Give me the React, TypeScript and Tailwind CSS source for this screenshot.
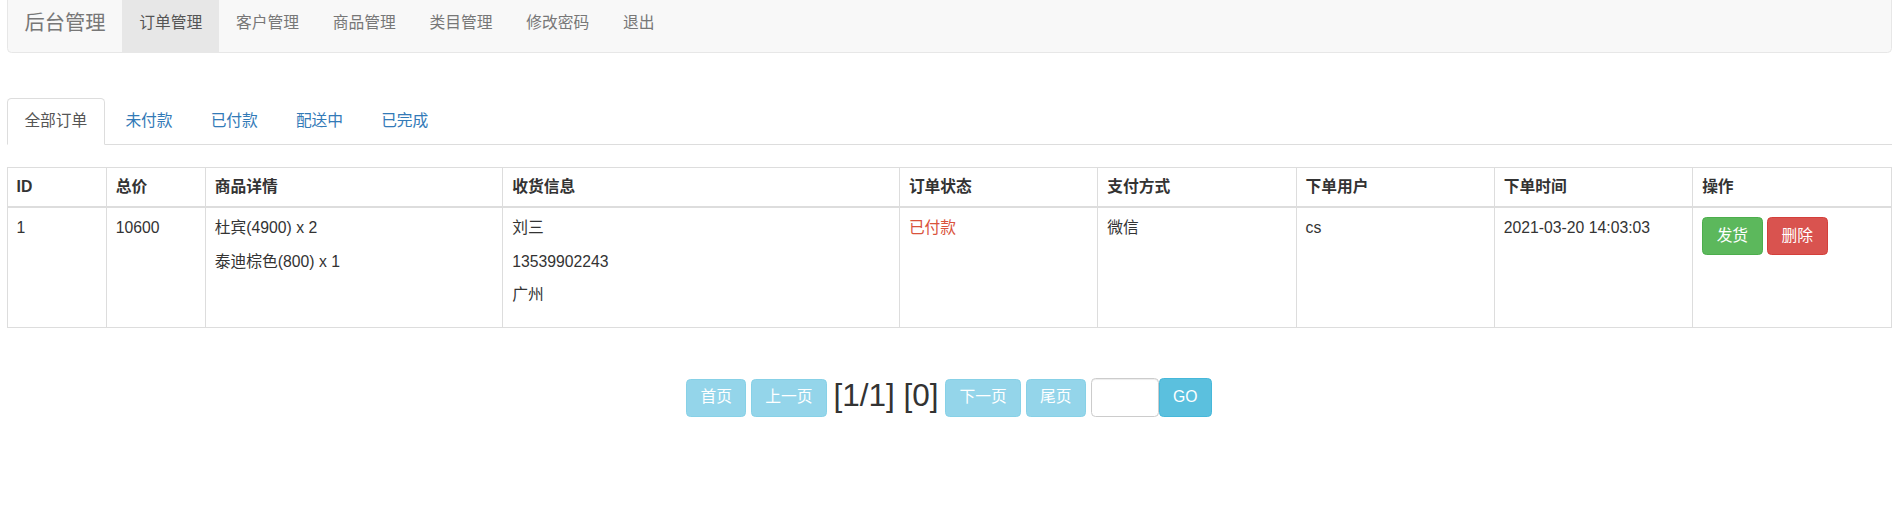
import React from "react";

const navItems = ["订单管理", "客户管理", "商品管理", "类目管理", "修改密码", "退出"];
const tabs = ["全部订单", "未付款", "已付款", "配送中", "已完成"];
const headers = ["ID", "总价", "商品详情", "收货信息", "订单状态", "支付方式", "下单用户", "下单时间", "操作"];

export default function App() {
  return (
    <div
      className="min-h-[532px] bg-white pl-[6.5px] pr-[11.5px] text-[15.75px] leading-[22.5px] text-[#333]"
      style={{ fontFamily: '"Liberation Sans", Arial, "Noto Sans CJK SC", sans-serif' }}
    >
      <nav className="mt-[-5.4px] flex h-[58.25px] rounded-[4.5px] border border-[#e7e7e7] bg-[#f8f8f8]">
        <a className="block px-[16.875px] py-[16.875px] text-[20.25px] leading-[22.5px] text-[#777]">后台管理</a>
        <ul className="flex">
          {navItems.map((t, i) => (
            <li key={t}>
              <a
                className={
                  i === 0
                    ? "block bg-[#e7e7e7] px-[16.875px] py-[16.875px] leading-[22.5px] text-[#555]"
                    : "block px-[16.875px] py-[16.875px] leading-[22.5px] text-[#777]"
                }
              >
                {t}
              </a>
            </li>
          ))}
        </ul>
      </nav>

      <ul className="mt-[45px] flex border-b border-[#ddd]">
        {tabs.map((t, i) => (
          <li key={t} className="-mb-px">
            <a
              className={
                i === 0
                  ? "mr-[2.25px] block rounded-t-[4.5px] border border-[#ddd] border-b-transparent bg-white px-[16.875px] py-[11.25px] leading-[22.5px] text-[#555]"
                  : "mr-[2.25px] block rounded-t-[4.5px] border border-transparent px-[16.875px] py-[11.25px] leading-[22.5px] text-[#337ab7]"
              }
            >
              {t}
            </a>
          </li>
        ))}
      </ul>

      <table className="mt-[22.5px] w-full table-fixed border-collapse border border-[#ddd]">
        <colgroup>
          <col className="w-[5.263%]" />
          <col className="w-[5.263%]" />
          <col className="w-[15.79%]" />
          <col className="w-[21.05%]" />
          <col className="w-[10.526%]" />
          <col className="w-[10.526%]" />
          <col className="w-[10.526%]" />
          <col className="w-[10.526%]" />
          <col className="w-[10.526%]" />
        </colgroup>
        <thead>
          <tr>
            {headers.map((h) => (
              <th key={h} className="border border-b-2 border-[#ddd] px-[9px] py-[7.5px] text-left align-bottom font-bold">
                {h}
              </th>
            ))}
          </tr>
        </thead>
        <tbody>
          <tr>
            <td className="border border-[#ddd] p-[9px] align-top">1</td>
            <td className="border border-[#ddd] p-[9px] align-top">10600</td>
            <td className="border border-[#ddd] p-[9px] align-top">
              <p className="mb-[11.25px]">杜宾(4900) x 2</p>
              <p className="mb-[11.25px]">泰迪棕色(800) x 1</p>
            </td>
            <td className="border border-[#ddd] p-[9px] align-top">
              <p className="mb-[11.25px]">刘三</p>
              <p className="mb-[11.25px]">13539902243</p>
              <p className="mb-[11.25px]">广州</p>
            </td>
            <td className="border border-[#ddd] p-[9px] align-top text-[#d9533c]">已付款</td>
            <td className="border border-[#ddd] p-[9px] align-top">微信</td>
            <td className="border border-[#ddd] p-[9px] align-top">cs</td>
            <td className="border border-[#ddd] p-[9px] align-top">2021-03-20 14:03:03</td>
            <td className="border border-[#ddd] p-[9px] align-top">
              <div className="flex gap-[4.4px]">
                <button className="rounded-[4.5px] border border-[#4cae4c] bg-[#5cb85c] px-[13.5px] py-[6.75px] text-[15.75px] leading-[22.5px] text-white">
                  发货
                </button>
                <button className="rounded-[4.5px] border border-[#d43f3a] bg-[#d9534f] px-[13.5px] py-[6.75px] text-[15.75px] leading-[22.5px] text-white">
                  删除
                </button>
              </div>
            </td>
          </tr>
        </tbody>
      </table>

      <div className="mt-[50px] flex items-center justify-center gap-[4.4px]">
        <button className="rounded-[4.5px] border border-[#87d1e7] bg-[#94d5ea] px-[13.5px] py-[6.75px] text-[15.75px] leading-[22.5px] text-white">
          首页
        </button>
        <button className="rounded-[4.5px] border border-[#87d1e7] bg-[#94d5ea] px-[13.5px] py-[6.75px] text-[15.75px] leading-[22.5px] text-white">
          上一页
        </button>
        <span className="mx-[2px] -mt-[6px] text-[31.5px] leading-[36px] text-[#333]">[1/1] [0]</span>
        <button className="rounded-[4.5px] border border-[#87d1e7] bg-[#94d5ea] px-[13.5px] py-[6.75px] text-[15.75px] leading-[22.5px] text-white">
          下一页
        </button>
        <button className="rounded-[4.5px] border border-[#87d1e7] bg-[#94d5ea] px-[13.5px] py-[6.75px] text-[15.75px] leading-[22.5px] text-white">
          尾页
        </button>
        <div className="flex">
          <input className="h-[39px] w-[68px] rounded-[4.5px] border border-[#ccc] bg-white shadow-[inset_0_1px_1px_rgba(0,0,0,0.075)] outline-none" />
          <button className="rounded-[4.5px] border border-[#46b8da] bg-[#5bc0de] px-[13.5px] py-[6.75px] text-[15.75px] leading-[22.5px] text-white">
            GO
          </button>
        </div>
      </div>
    </div>
  );
}
